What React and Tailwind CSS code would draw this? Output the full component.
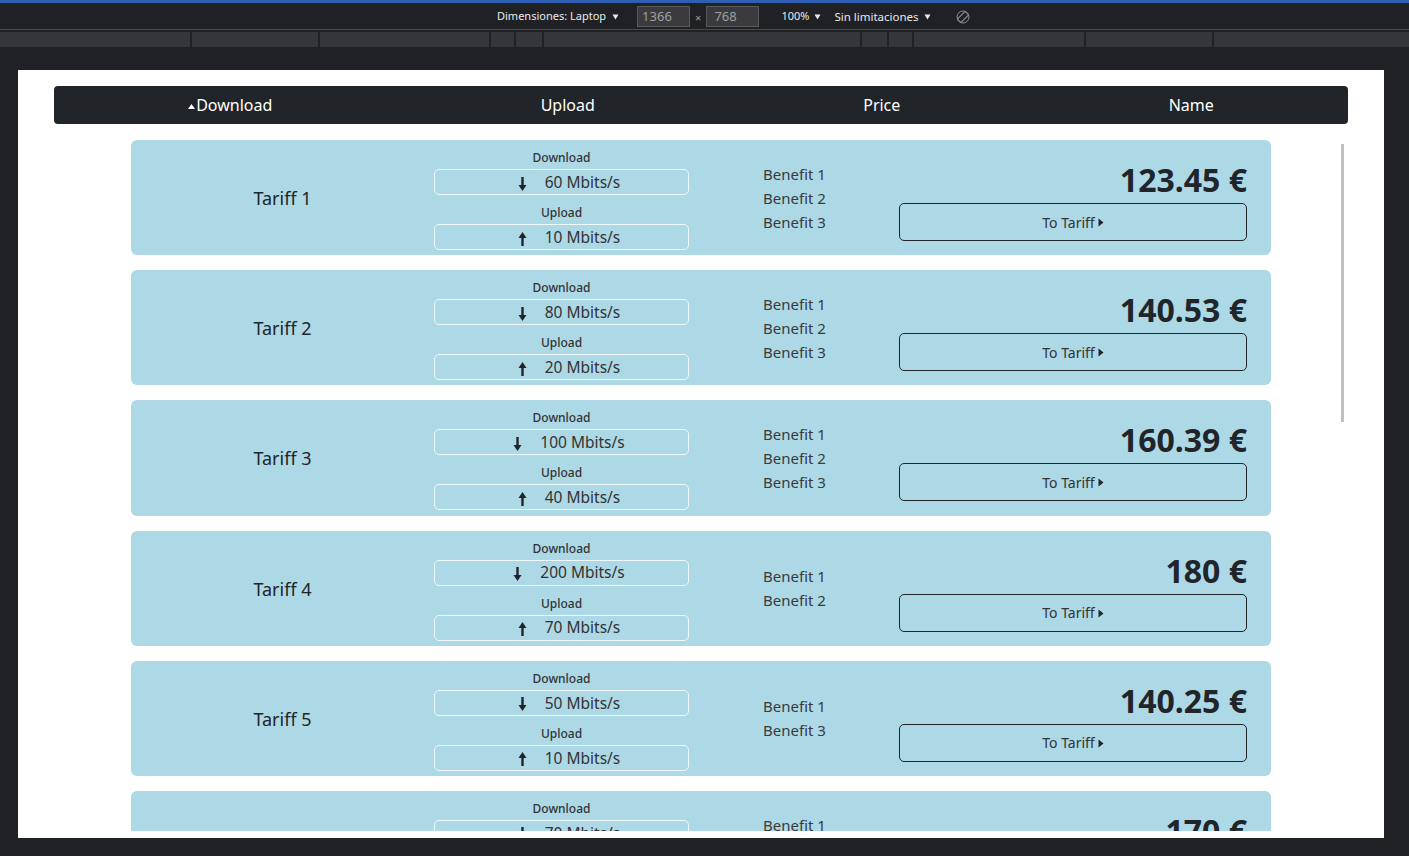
import React from 'react';

const tariffs = [
  { name: 'Tariff 1', down: 60, up: 10, benefits: ['Benefit 1', 'Benefit 2', 'Benefit 3'], price: '123.45 €' },
  { name: 'Tariff 2', down: 80, up: 20, benefits: ['Benefit 1', 'Benefit 2', 'Benefit 3'], price: '140.53 €' },
  { name: 'Tariff 3', down: 100, up: 40, benefits: ['Benefit 1', 'Benefit 2', 'Benefit 3'], price: '160.39 €' },
  { name: 'Tariff 4', down: 200, up: 70, benefits: ['Benefit 1', 'Benefit 2'], price: '180 €' },
  { name: 'Tariff 5', down: 50, up: 10, benefits: ['Benefit 1', 'Benefit 3'], price: '140.25 €' },
  { name: 'Tariff 6', down: 70, up: 30, benefits: ['Benefit 1', 'Benefit 2', 'Benefit 3'], price: '170 €' },
];

const strip = [192, 128, 171, 25, 28, 318, 27, 25, 172, 128];

function Caret({ className }) {
  return (
    <svg width="7" height="6" viewBox="0 0 7 6" className={className}>
      <path d="M0.5 0.5 L6.5 0.5 L3.5 5.5 Z" fill="currentColor" />
    </svg>
  );
}

function Arrow({ up }) {
  return (
    <svg width="9" height="14" viewBox="0 0 9 14" className={up ? 'rotate-180' : ''}>
      <rect x="3.3" y="0" width="2.4" height="9" fill="#212529" />
      <path d="M0.5 8 L8.5 8 L4.5 14 Z" fill="#212529" />
    </svg>
  );
}

function Speed({ label, value, up }) {
  return (
    <div className="flex flex-col items-center">
      <div className="text-[12px] leading-[18px] font-medium text-[#333]">{label}</div>
      <div className="mt-[2px] w-full h-[26px] rounded-[5px] border border-[#eef8fb] flex items-center justify-center pl-[15px] pt-[1px]">
        <span className="mr-[18px] flex mt-[2px]"><Arrow up={up} /></span>
        <span className="text-[15.5px] text-[#333]">{value} Mbits/s</span>
      </div>
    </div>
  );
}

function Card({ t }) {
  return (
    <div className="w-[1140px] h-[115.2px] shrink-0 mx-auto bg-[#add8e6] rounded-[6px] flex">
      <div className="w-[303px] flex items-center justify-center text-[18px] text-[#212529] pt-[2px]">{t.name}</div>
      <div className="w-[255px] pt-[9px] flex flex-col">
        <Speed label="Download" value={t.down} />
        <div className="mt-[9px]">
          <Speed label="Upload" value={t.up} up />
        </div>
      </div>
      <div className="w-[210px] pl-[74px] flex flex-col justify-center text-[15px] leading-[24px] text-[#3a3a3a]">
        {t.benefits.map((b) => (
          <div key={b}>{b}</div>
        ))}
      </div>
      <div className="w-[348px] pt-[21px] flex flex-col items-end">
        <div className="text-[32px] leading-[38px] font-bold text-[#212529]">{t.price}</div>
        <button className="mt-[4px] w-full h-[38px] rounded-[5px] border border-[#212529] flex items-center justify-center text-[14px] text-[#333]">
          To Tariff
          <svg width="6" height="9" viewBox="0 0 6 9" className="ml-[3px] mt-[1px]">
            <path d="M0.5 0.5 L5.5 4.5 L0.5 8.5 Z" fill="#212529" />
          </svg>
        </button>
      </div>
    </div>
  );
}

export default function App() {
  return (
    <div className="w-[1409px] h-[856px] bg-[#202124] flex flex-col overflow-hidden" style={{ fontFamily: '"Noto Sans", "Open Sans", sans-serif' }}>
      <div className="h-[3px] bg-[#2f5fb3]" />
      <div className="h-[26px] flex items-center pl-[497px] text-[11px] text-[#e8eaed] pt-[1px]">
        <span>Dimensiones: Laptop</span>
        <Caret className="ml-[6px]" />
        <div className="ml-[18px] w-[53px] h-[21px] bg-[#3b3b3d] border border-[#5a5a5d] text-[#9aa0a6] text-[13px] leading-[19px] pl-[4px]">1366</div>
        <span className="mx-[5px] text-[#9aa0a6] mt-[4px]">×</span>
        <div className="w-[53px] h-[21px] bg-[#3b3b3d] border border-[#5a5a5d] text-[#9aa0a6] text-[13px] leading-[19px] pl-[7px]">768</div>
        <span className="ml-[22px]">100%</span>
        <Caret className="ml-[5px]" />
        <span className="ml-[13px] text-[11.5px]">Sin limitaciones</span>
        <Caret className="ml-[5px]" />
        <svg width="14" height="14" viewBox="0 0 14 14" className="ml-[25px]">
          <circle cx="7" cy="7" r="6" fill="none" stroke="#8a8d91" strokeWidth="1" />
          <rect x="4.5" y="1.5" width="5" height="11" rx="1" fill="none" stroke="#8a8d91" strokeWidth="1.2" transform="rotate(45 7 7)" />
        </svg>
      </div>
      <div className="h-[1px] bg-[#4a4a4d]" />
      <div className="h-[2px]" />
      <div className="h-[15px] flex bg-[#35363a]">
        {strip.map((w, i) => (
          <div key={i} className="border-r-2 border-[#202124]" style={{ width: w }} />
        ))}
        <div className="flex-1" />
      </div>
      <div className="pt-[23px] pl-[18px]">
        <div className="w-[1366px] h-[768px] bg-white pt-[16px] px-[36px]">
          <div className="h-[38px] bg-[#212529] rounded-[4px] flex items-center justify-around text-white text-[16px]">
            <span className="flex items-center">
              <svg width="7" height="5" viewBox="0 0 7 5" className="mt-[2px] mr-[1px]">
                <path d="M0 5 L7 5 L3.5 0 Z" fill="#fff" />
              </svg>
              Download
            </span>
            <span>Upload</span>
            <span>Price</span>
            <span>Name</span>
          </div>
          <div className="relative h-[707px] overflow-hidden">
            <div className="pt-[16px] flex flex-col gap-[15px]">
              {tariffs.map((t) => (
                <Card key={t.name} t={t} />
              ))}
            </div>
            <div className="absolute right-[4px] top-[20px] w-[3px] h-[278px] bg-[#c1c1c1]" />
          </div>
        </div>
      </div>
    </div>
  );
}
